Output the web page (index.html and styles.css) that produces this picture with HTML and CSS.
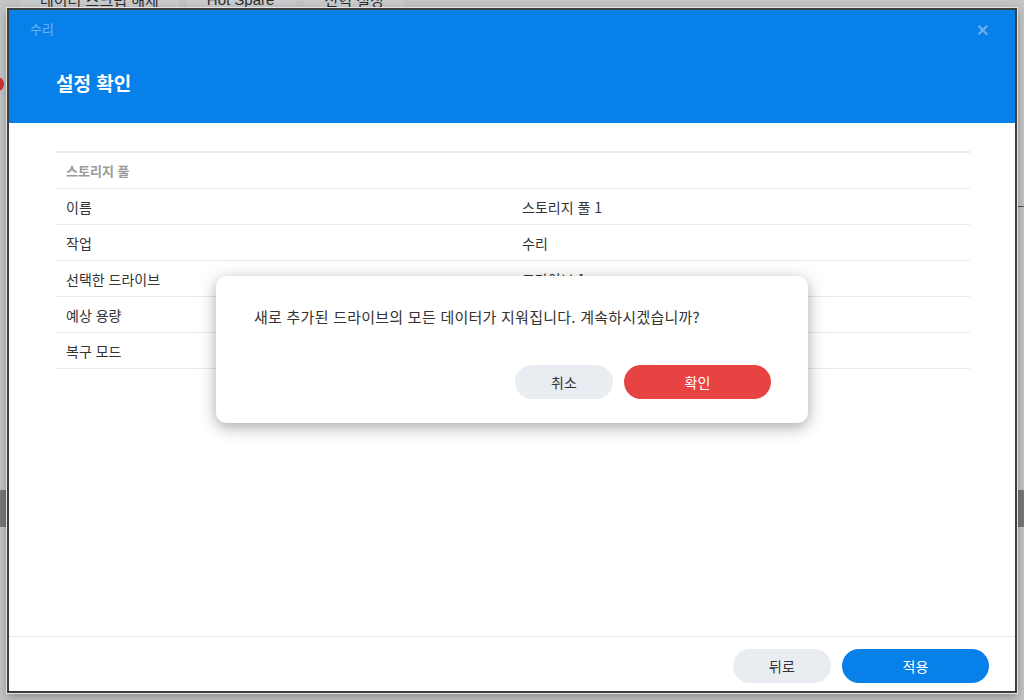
FILE: index.html
```html
<!DOCTYPE html>
<html lang="ko">
<head>
    <meta charset="UTF-8">
    <title>수리 - 설정 확인</title>
    <link rel="stylesheet" href="styles.css">
</head>
<body>
    <!-- dimmed page behind the wizard -->
    <div class="backdrop">
        <div class="bg-tabs">
            <span class="bg-tab">데이터 스크럽 해제</span>
            <span class="bg-tab">Hot Spare</span>
            <span class="bg-tab">전역 설정</span>
        </div>
        <div class="bg-dot"></div>
        <div class="bg-row"></div>
        <div class="bg-line"></div>
    </div>

    <div class="wizard">
        <div class="wizard-header">
            <div class="wizard-top">
                <span class="wizard-name">수리</span>
                <span class="wizard-close">&#x2715;</span>
            </div>
            <h1>설정 확인</h1>
        </div>

        <div class="wizard-body">
            <div class="summary">
                <div class="summary-row summary-head">
                    <span>스토리지 풀</span>
                    <span></span>
                </div>
                <div class="summary-row">
                    <span>이름</span>
                    <span>스토리지 풀 1</span>
                </div>
                <div class="summary-row">
                    <span>작업</span>
                    <span>수리</span>
                </div>
                <div class="summary-row">
                    <span>선택한 드라이브</span>
                    <span>드라이브 1</span>
                </div>
                <div class="summary-row">
                    <span>예상 용량</span>
                    <span></span>
                </div>
                <div class="summary-row">
                    <span>복구 모드</span>
                    <span></span>
                </div>
            </div>

            <!-- confirmation message box -->
            <div class="confirm">
                <p>새로 추가된 드라이브의 모든 데이터가 지워집니다. 계속하시겠습니까?</p>
                <div class="confirm-actions">
                    <button class="btn btn-gray">취소</button>
                    <button class="btn btn-red">확인</button>
                </div>
            </div>
        </div>

        <div class="wizard-footer">
            <button class="btn btn-gray">뒤로</button>
            <button class="btn btn-blue">적용</button>
        </div>
    </div>
</body>
</html>
```

FILE: styles.css
```css
* {
    box-sizing: border-box;
}

body {
    margin: 0;
    width: 1024px;
    height: 700px;
    overflow: hidden;
    position: relative;
    background-color: #c4c5c7;
    font-family: "Noto Sans CJK KR", "Noto Sans", sans-serif;
    color: #333;
}

.backdrop {
    position: absolute;
    inset: 0;
}

.bg-tabs {
    position: absolute;
    top: -9px;
    left: 20px;
    display: flex;
    gap: 8px;
}

.bg-tab {
    padding: 0 20px;
    height: 18px;
    line-height: 18px;
    background-color: #cbccce;
    border-radius: 4px;
    font-size: 15px;
    color: #2c2c2c;
}

.bg-tab:nth-child(2) {
    padding: 0 22px 0 20px;
    font-family: "Liberation Sans", sans-serif;
}

.bg-dot {
    position: absolute;
    left: -8px;
    top: 77px;
    width: 12px;
    height: 14px;
    border-radius: 50%;
    background-color: #c9343a;
}

.bg-row {
    position: absolute;
    left: 0;
    right: 0;
    top: 490px;
    height: 37px;
    background-color: #77797c;
}

.bg-line {
    position: absolute;
    right: 0;
    top: 206px;
    width: 8px;
    height: 1px;
    background-color: #555;
}

.wizard {
    position: relative;
    margin: 8px 0 0 7px;
    width: 1010px;
    height: 685px;
    display: flex;
    flex-direction: column;
    background-color: #fff;
    border: 2px solid #3d3d3d;
    box-shadow: 0 0 0 1px #e4e4e4, 0 3px 10px rgba(0, 0, 0, 0.35);
}

.wizard-header {
    height: 113px;
    background-color: #0780e9;
    padding: 8px 26px 0 21px;
}

.wizard-top {
    display: flex;
    justify-content: space-between;
    align-items: center;
    height: 20px;
}

.wizard-name {
    font-size: 13px;
    color: #6cb2f3;
}

.wizard-close {
    font-size: 16px;
    font-weight: bold;
    color: #66aef2;
    margin-top: 2px;
}

.wizard-header h1 {
    margin: 31px 0 0 26px;
    font-size: 19px;
    font-weight: bold;
    color: #fff;
}

.wizard-body {
    position: relative;
    flex: 1;
    padding: 28px 45px 0 47px;
}

.summary {
    border-top: 2px solid #e6ebf1;
}

.summary-row {
    display: grid;
    grid-template-columns: 446px 1fr;
    height: 36px;
    align-items: center;
    padding-left: 10px;
    border-bottom: 1px solid #e6ebf1;
    font-size: 14px;
}

.summary-row span:last-child {
    padding-left: 10px;
}

.summary-head {
    font-size: 13px;
    font-weight: bold;
    color: #9a9a9a;
}

.confirm {
    position: absolute;
    left: 207px;
    top: 153px;
    width: 592px;
    height: 147px;
    padding: 30px 37px 24px 38px;
    background-color: #fff;
    border-radius: 10px;
    box-shadow: 0 4px 16px rgba(0, 0, 0, 0.35);
    display: flex;
    flex-direction: column;
    justify-content: space-between;
}

.confirm p {
    margin: 0;
    font-size: 15px;
    letter-spacing: 0.25px;
    color: #333;
}

.confirm-actions {
    display: flex;
    justify-content: flex-end;
    gap: 11px;
}

.btn {
    height: 34px;
    border: none;
    border-radius: 17px;
    font-family: inherit;
    font-size: 14px;
    cursor: pointer;
}

.btn-gray {
    width: 98px;
    background-color: #e9edf1;
    color: #333;
}

.btn-red {
    width: 147px;
    background-color: #e84343;
    color: #fff;
}

.btn-blue {
    width: 147px;
    background-color: #0780e9;
    color: #fff;
}

.wizard-footer {
    height: 55px;
    border-top: 1px solid #e6ebf1;
    display: flex;
    justify-content: flex-end;
    align-items: flex-start;
    gap: 11px;
    padding: 12px 26px 0 0;
}
```
